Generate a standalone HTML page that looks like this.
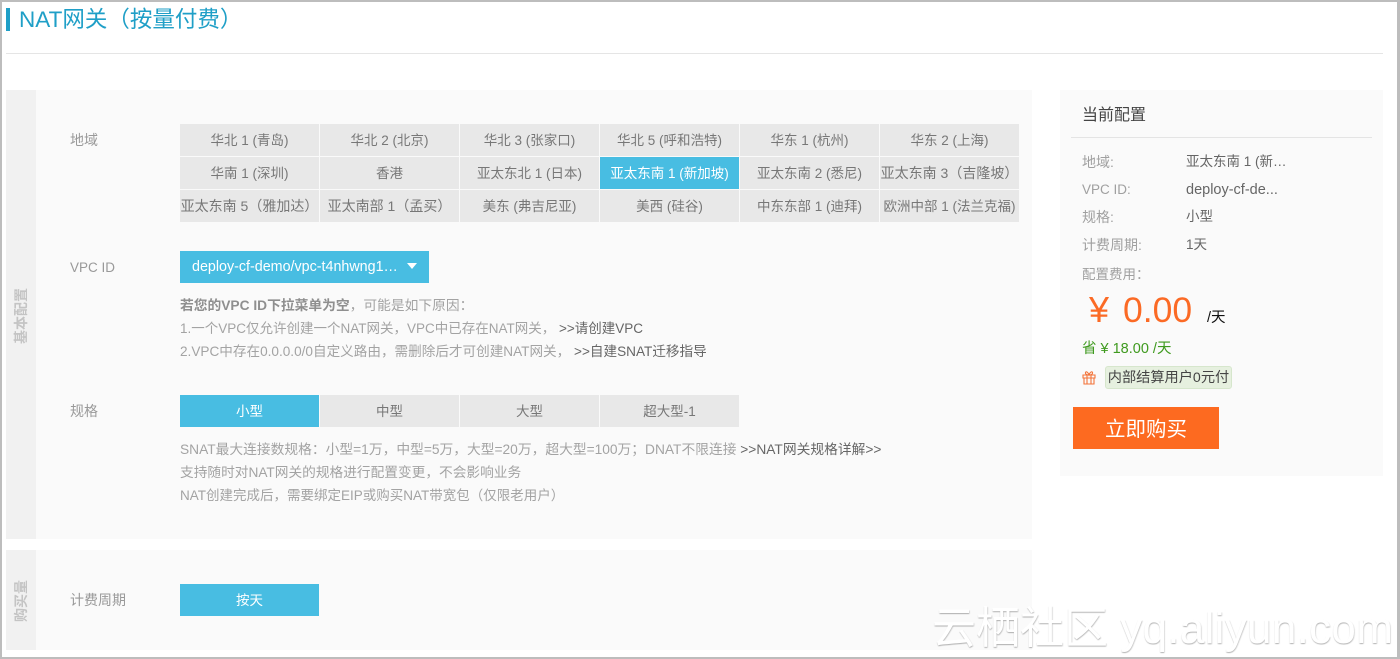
<!DOCTYPE html>
<html lang="zh"><head><meta charset="utf-8"><title>NAT网关</title>
<style>
*{box-sizing:border-box}
html,body{margin:0;padding:0}
body{width:1400px;height:659px;position:relative;overflow:hidden;background:#fff;font-family:"Liberation Sans","Noto Sans CJK SC",sans-serif;font-size:13px;color:#999}
.a{position:absolute;white-space:nowrap}
.frame{position:absolute;left:0;top:0;width:1400px;height:659px;border:solid #bdbdbd;border-width:2px 3px 2px 2px;z-index:5;pointer-events:none}
.b{position:absolute;width:139px;height:32px;background:#e8e8e8;color:#777;text-align:center;line-height:33px;font-size:13.500px;white-space:nowrap;overflow:hidden}
.w{font-size:14px;line-height:33px}
.on{background:#48bde2;color:#fff}
.l{position:absolute;left:70px;color:#999;font-size:14px;line-height:18px}
.n{position:absolute;left:180px;font-size:13.600px;line-height:18px;color:#a3a3a3;white-space:nowrap}
.n b{color:#8f8f8f}.n span{color:#666}
.k{position:absolute;left:1082px;color:#a0a0a0;font-size:14px;line-height:18px;white-space:nowrap}
.v{position:absolute;left:1186px;color:#666;font-size:13.500px;line-height:18px;white-space:nowrap}
.rot{position:absolute;transform:rotate(-90deg);font-weight:bold;color:#c4c4c4;font-size:14px;white-space:nowrap;line-height:16px;text-align:center}
</style></head><body>
<div class="frame"></div>
<div class="a" style="left:6px;top:8px;width:4px;height:23px;background:#1f9fc7"></div>
<div class="a" style="left:19px;top:6px;font-size:22.500px;line-height:28px;color:#1f9fc7">NAT网关（按量付费）</div>
<div class="a" style="left:6px;top:53px;width:1377px;height:1px;background:#e5e5e5"></div>

<div class="a" style="left:6px;top:90px;width:1026px;height:449px;background:#fafafa"></div>
<div class="a" style="left:6px;top:90px;width:30px;height:449px;background:#f1f1f1"></div>
<div class="rot" style="left:-9px;top:308px;width:60px;height:16px">基本配置</div>

<div class="a" style="left:6px;top:550px;width:1026px;height:100px;background:#fafafa"></div>
<div class="a" style="left:6px;top:550px;width:30px;height:100px;background:#f1f1f1"></div>
<div class="rot" style="left:-9px;top:593px;width:60px;height:16px">购买量</div>

<div class="l" style="top:131px">地域</div>
<div class="b" style="left:180px;top:124px">华北 1 (青岛)</div>
<div class="b" style="left:320px;top:124px">华北 2 (北京)</div>
<div class="b" style="left:460px;top:124px">华北 3 (张家口)</div>
<div class="b" style="left:600px;top:124px">华北 5 (呼和浩特)</div>
<div class="b" style="left:740px;top:124px">华东 1 (杭州)</div>
<div class="b" style="left:880px;top:124px">华东 2 (上海)</div>
<div class="b" style="left:180px;top:157px">华南 1 (深圳)</div>
<div class="b" style="left:320px;top:157px">香港</div>
<div class="b" style="left:460px;top:157px">亚太东北 1 (日本)</div>
<div class="b on" style="left:600px;top:157px">亚太东南 1 (新加坡)</div>
<div class="b" style="left:740px;top:157px">亚太东南 2 (悉尼)</div>
<div class="b w" style="left:880px;top:157px">亚太东南 3（吉隆坡）</div>
<div class="b w" style="left:180px;top:190px">亚太东南 5（雅加达）</div>
<div class="b w" style="left:320px;top:190px">亚太南部 1（孟买）</div>
<div class="b" style="left:460px;top:190px">美东 (弗吉尼亚)</div>
<div class="b" style="left:600px;top:190px">美西 (硅谷)</div>
<div class="b" style="left:740px;top:190px">中东东部 1 (迪拜)</div>
<div class="b" style="left:880px;top:190px">欧洲中部 1 (法兰克福)</div>

<div class="l" style="top:259px;font-size:13.500px">VPC ID</div>
<div class="a" style="left:180px;top:251px;width:249px;height:32px;background:#48bde2;color:#fff;line-height:33px;padding-left:12px;font-size:14.300px">deploy-cf-demo/vpc-t4nhwng1…</div>
<svg class="a" style="left:406px;top:263px" width="12" height="7" viewBox="0 0 12 7"><path d="M1 0H11L6 6Z" fill="#fff"/></svg>
<div class="n" style="top:297px;font-size:13.750px"><b>若您的VPC ID下拉菜单为空</b>，可能是如下原因：</div>
<div class="n" style="top:320px;font-size:13.500px">1.一个VPC仅允许创建一个NAT网关，VPC中已存在NAT网关， <span>&gt;&gt;请创建VPC</span></div>
<div class="n" style="top:343px">2.VPC中存在0.0.0.0/0自定义路由，需删除后才可创建NAT网关， <span>&gt;&gt;自建SNAT迁移指导</span></div>

<div class="l" style="top:402px">规格</div>
<div class="b on" style="left:180px;top:395px">小型</div>
<div class="b" style="left:320px;top:395px">中型</div>
<div class="b" style="left:460px;top:395px">大型</div>
<div class="b" style="left:600px;top:395px">超大型-1</div>
<div class="n" style="top:441px;font-size:13.750px">SNAT最大连接数规格：小型=1万，中型=5万，大型=20万，超大型=100万；DNAT不限连接 <span>&gt;&gt;NAT网关规格详解&gt;&gt;</span></div>
<div class="n" style="top:464px;font-size:13.700px">支持随时对NAT网关的规格进行配置变更，不会影响业务</div>
<div class="n" style="top:487px;font-size:13.500px">NAT创建完成后，需要绑定EIP或购买NAT带宽包（仅限老用户）</div>

<div class="l" style="top:591px">计费周期</div>
<div class="b on" style="left:180px;top:584px">按天</div>

<div class="a" style="left:1060px;top:90px;width:323px;height:386px;background:#fafafa"></div>
<div class="a" style="left:1082px;top:106px;font-size:16px;line-height:20px;color:#444">当前配置</div>
<div class="a" style="left:1071px;top:137px;width:301px;height:1px;background:#e4e4e4"></div>
<div class="k" style="top:153px">地域:</div><div class="v" style="top:153px">亚太东南 1 (新…</div>
<div class="k" style="top:181px;font-size:13.500px">VPC ID:</div><div class="v" style="top:181px;font-size:14.500px">deploy-cf-de...</div>
<div class="k" style="top:208px">规格:</div><div class="v" style="top:208px">小型</div>
<div class="k" style="top:236px">计费周期:</div><div class="v" style="top:236px">1天</div>
<div class="k" style="top:266px;font-size:13.500px">配置费用：</div>
<div class="a" style="left:1089px;top:287px;font-size:36px;line-height:46px;color:#fb6a25">¥</div>
<div class="a" style="left:1123px;top:287px;font-size:35.500px;line-height:46px;color:#fb6a25">0.00</div>
<div class="a" style="left:1207px;top:309px;font-size:14.500px;line-height:18px;color:#111">/天</div>
<div class="a" style="left:1082px;top:340px;font-size:14.500px;line-height:18px;color:#3f9a1f">省 ¥ 18.00 /天</div>
<svg class="a" style="left:1082px;top:370px" width="14" height="15" viewBox="0 0 14 15" fill="none" stroke="#f3743a" stroke-width="1.1"><path d="M1 5H13V8H1ZM2 8V14H12V8M5 5V14M9 5V14M7 5C5 5 3 4 3.500 2.500C4 1 6 2 7 5C8 2 10 1 10.500 2.500C11 4 9 5 7 5"/></svg>
<div class="a" style="left:1105px;top:366px;width:127px;height:23px;background:#e6f0df;border:1px solid #d6e6cc;border-radius:3px;color:#444;font-size:14.200px;line-height:22px;text-align:center;overflow:hidden">内部结算用户0元付</div>
<div class="a" style="left:1073px;top:407px;width:146px;height:42px;background:#fd6a20;color:#fff;font-size:20.500px;line-height:45px;text-align:center">立即购买</div>

<div class="a" style="left:932px;top:604px;font-size:44px;line-height:50px;color:#fff;text-shadow:0 1px 1px rgba(0,0,0,.22),1px 1px 1px rgba(0,0,0,.1);z-index:6">云栖社区 <span style="letter-spacing:.3px">yq.aliyun.com</span></div>
</body></html>
